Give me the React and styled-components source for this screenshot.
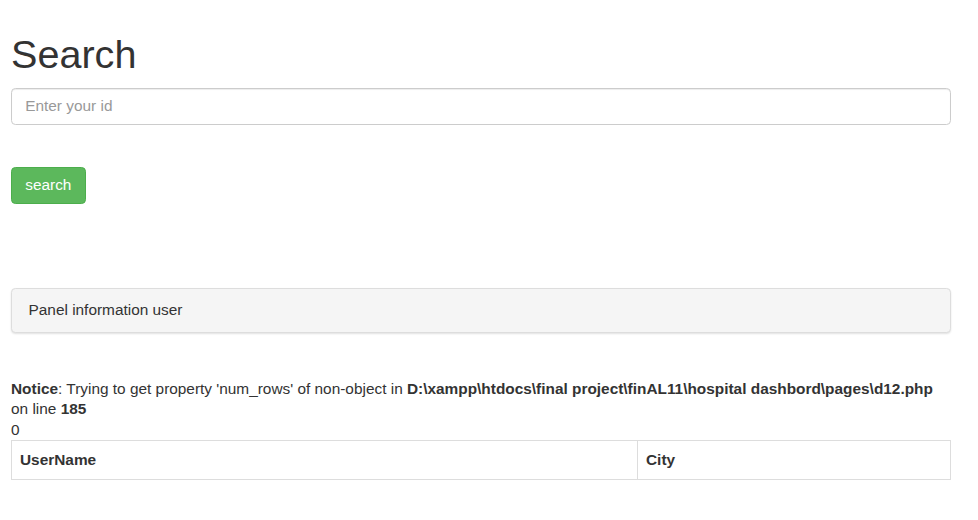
import React from 'react'
import styled, { createGlobalStyle } from 'styled-components'

const GlobalStyle = createGlobalStyle`
  html, body {
    margin: 0;
    padding: 0;
    background: #fff;
  }
  body {
    font-family: "Liberation Sans", Arial, Helvetica, sans-serif;
    font-size: 15.4px;
    line-height: 22px;
    color: #333;
  }
  * { box-sizing: border-box; }
`

const Page = styled.div`
  width: 962px;
  padding: 11px 11px 22px 11px;
`

const Title = styled.h1`
  margin: 22px 0 11px;
  font-size: 39.6px;
  line-height: 43.5px;
  font-weight: 500;
  color: #333;
`

const Form = styled.form`
  display: flex;
  flex-direction: column;
  align-items: flex-start;
  gap: 42px;
  margin-bottom: 84px;
`

const Input = styled.input`
  display: block;
  width: 100%;
  height: 37px;
  padding: 6.6px 13.2px;
  font-family: inherit;
  font-size: 15.4px;
  color: #555;
  background: #fff;
  border: 1px solid #ccc;
  border-radius: 4.4px;
  box-shadow: inset 0 1px 1px rgba(0, 0, 0, 0.075);
  outline: none;
  &::placeholder {
    color: #999;
  }
`

const Button = styled.button`
  height: 37px;
  padding: 0 13.2px;
  font-family: inherit;
  font-size: 15.4px;
  line-height: 22px;
  color: #fff;
  background: #5cb85c;
  border: 1px solid #4cae4c;
  border-radius: 4.4px;
  cursor: pointer;
`

const Panel = styled.div`
  background: #f5f5f5;
  border: 1px solid #ddd;
  border-radius: 4.4px;
  box-shadow: 0 1px 2px rgba(0, 0, 0, 0.12);
  padding: 10.5px 16.5px;
  margin-bottom: 46px;
`

const Notice = styled.div`
  line-height: 20.5px;
  b { font-weight: 700; }
`

const Table = styled.table`
  width: 100%;
  border-collapse: collapse;
  border: 1px solid #ddd;
  th {
    text-align: left;
    font-weight: 700;
    padding: 8px 8px;
    line-height: 22px;
    border: 1px solid #ddd;
  }
  th:first-child {
    width: 626px;
  }
`

export default function App() {
  return (
    <>
      <GlobalStyle />
      <Page>
        <Title>Search</Title>
        <Form onSubmit={(e) => e.preventDefault()}>
          <Input type="text" placeholder="Enter your id" />
          <Button type="submit">search</Button>
        </Form>
        <Panel>Panel information user</Panel>
        <Notice>
          <b>Notice</b>: Trying to get property 'num_rows' of non-object in <b>D:\xampp\htdocs\final project\finAL11\hospital dashbord\pages\d12.php</b>
          <br />
          on line <b>185</b>
          <br />
          0
        </Notice>
        <Table>
          <thead>
            <tr>
              <th>UserName</th>
              <th>City</th>
            </tr>
          </thead>
        </Table>
      </Page>
    </>
  )
}
